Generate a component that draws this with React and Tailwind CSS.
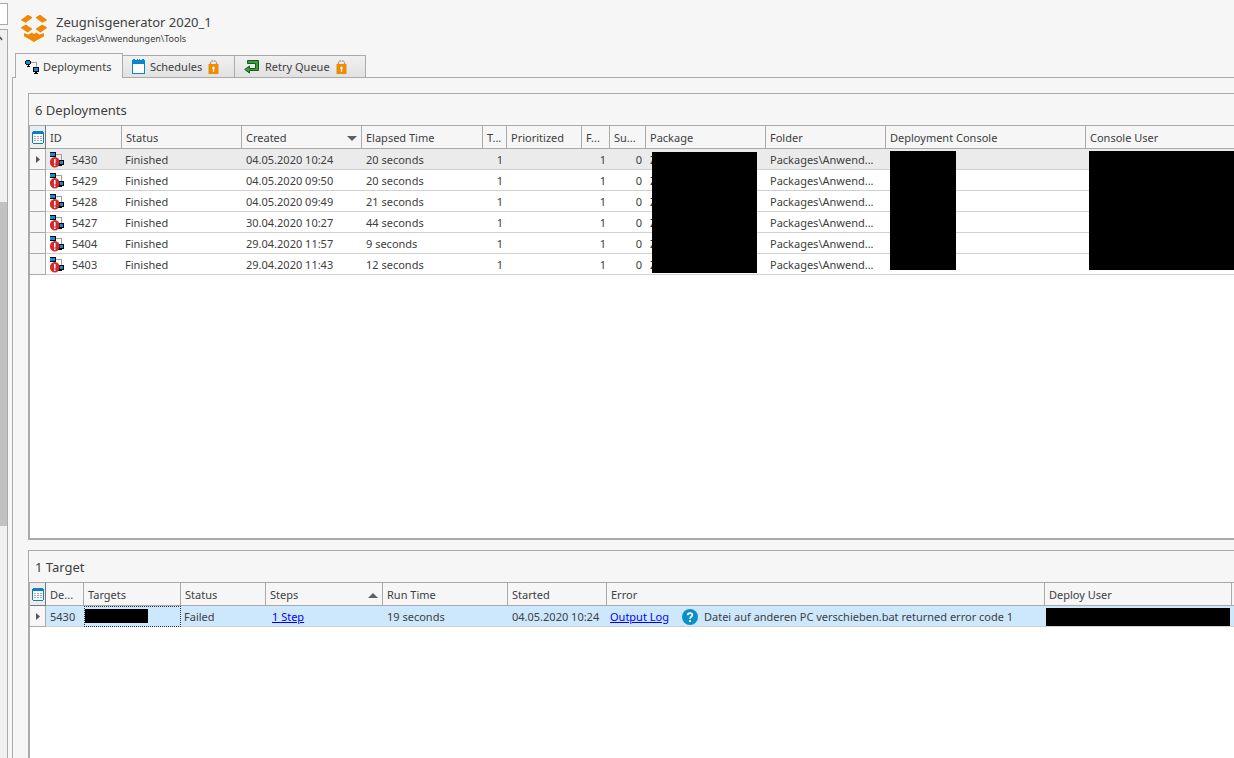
const BLOCK = "absolute bg-black";

const deploymentColumns = [
  { name: "ID", width: 76 },
  { name: "Status", width: 120 },
  { name: "Created", width: 120, sort: "desc" },
  { name: "Elapsed Time", width: 121 },
  { name: "T...", width: 24 },
  { name: "Prioritized", width: 75 },
  { name: "F...", width: 28 },
  { name: "Su...", width: 36 },
  { name: "Package", width: 120 },
  { name: "Folder", width: 120 },
  { name: "Deployment Console", width: 200 },
  { name: "Console User" },
];

const targetColumns = [
  { name: "De...", width: 38 },
  { name: "Targets", width: 97 },
  { name: "Status", width: 85 },
  { name: "Steps", width: 117, sort: "asc" },
  { name: "Run Time", width: 125 },
  { name: "Started", width: 99 },
  { name: "Error", width: 438 },
  { name: "Deploy User", width: 187 },
  { name: "" },
];

const deployments = [
  { id: 5430, created: "04.05.2020 10:24", elapsed: "20 seconds" },
  { id: 5429, created: "04.05.2020 09:50", elapsed: "20 seconds" },
  { id: 5428, created: "04.05.2020 09:49", elapsed: "21 seconds" },
  { id: 5427, created: "30.04.2020 10:27", elapsed: "44 seconds" },
  { id: 5404, created: "29.04.2020 11:57", elapsed: "9 seconds" },
  { id: 5403, created: "29.04.2020 11:43", elapsed: "12 seconds" },
];

function PackageLogo() {
  return (
    <svg
      width="26"
      height="28"
      viewBox="0 0 26 28"
      fill="#f08705"
      stroke="#f08705"
      strokeWidth="1.4"
      strokeLinejoin="round"
      className="shrink-0"
    >
      <path d="M0.8 6 7 1.6 10.4 3.6 4.6 8z" />
      <path d="M25.2 6 19 1.6 15.6 3.6 21.4 8z" />
      <path d="M0.8 13.6 4.8 11.4 10.4 15 6.6 17.8z" />
      <path d="M25.2 13.6 21.2 11.4 15.6 15 19.4 17.8z" />
      <path d="M3.7 20 7.5 21.3 10.8 19.3 13 21 15.2 19.3 18.5 21.3 22.3 20V22L13 27.2 3.7 22z" />
    </svg>
  );
}

function NodesIcon() {
  return (
    <svg width="15" height="15" viewBox="0 0 15 15" shapeRendering="crispEdges" className="shrink-0">
      <path d="M6 2.5H11.5V7" fill="none" stroke="#a0a0a0" />
      <path d="M1 0H5V1H6V4H5V5H4V6H5V7H2V6H3V5H1V4H0V1H1z" fill="#000" />
      <path d="M1 1H5V4H1z" fill="#0a8fd0" />
      <path d="M8 7H14V12H12V13H13V14H9V13H10V12H8z" fill="#000" />
      <path d="M9 8H13V11H9z" fill="#0a8fd0" />
    </svg>
  );
}

function FailedIcon() {
  return (
    <svg width="15" height="16" viewBox="0 0 15 16" className="shrink-0">
      <g shapeRendering="crispEdges">
        <path d="M6 2.5H11.5V8" fill="none" stroke="#a0a0a0" />
        <path d="M0 0H6V5H0z" fill="#000" />
        <path d="M1 1H5V4H1zM0 1H1V4H0z" fill="#0a8fd0" />
        <path d="M8 8H14V13H12V14H8z" fill="#000" />
        <path d="M10 9H13V12H10z" fill="#0a8fd0" />
      </g>
      <ellipse cx="4.8" cy="10.2" rx="4.9" ry="5.3" fill="#d42a2e" />
      <path d="M4 7H5.5V11.5H4zM4 12.5H5.5V14H4z" fill="#fff" />
    </svg>
  );
}

function CalendarIcon() {
  return (
    <svg width="13" height="15" viewBox="0 0 13 15" shapeRendering="crispEdges" className="shrink-0">
      <path d="M0 1H1V0H3V1H5V0H6V1H7V0H8V1H10V0H12V1H13V15H0z" fill="#0a84cc" />
      <path d="M1 5H12V14H1z" fill="#fff" />
    </svg>
  );
}

function LockIcon() {
  return (
    <svg width="11" height="14" viewBox="0 0 11 14" className="ml-px shrink-0">
      <path d="M2.5 4V3C2.5 0 8.5 0 8.5 3V4" fill="none" stroke="#a5a5a5" strokeWidth="1.4" strokeDasharray="2 0.7" />
      <path d="M0.5 4H10.5V14H0.5z" fill="#f08c00" />
      <path d="M5.5 6.5V12M4 8H7" stroke="#fff" strokeWidth="1.2" />
    </svg>
  );
}

function RetryIcon() {
  return (
    <svg width="16" height="15" viewBox="0 0 16 15" className="shrink-0">
      <path
        d="M3.5 1.5H14.5V11.5H5.5V14L0.7 10.5 5.5 7V9.5H11.5V4.5H3.5z"
        fill="#3a9a3c"
        stroke="#145c1c"
      />
    </svg>
  );
}

function GridIcon() {
  return (
    <svg width="12" height="13" viewBox="0 0 12 13" shapeRendering="crispEdges" className="mx-auto block">
      <path d="M1 0H11V1H12V12H11V13H1V12H0V1H1z" fill="#0a7ec8" />
      <path d="M1 3H11V12H1z" fill="#fff" />
      <path d="M2 5.5H10M2 7.5H10M2 9.5H10" stroke="#a8a8a8" strokeDasharray="2 1" />
    </svg>
  );
}

function HelpIcon() {
  return (
    <svg width="16" height="16" viewBox="0 0 16 16" className="shrink-0">
      <circle cx="8" cy="8" r="8" fill="#0a8fc8" />
      <path d="M5.7 6.2C5.7 3.4 10.3 3.4 10.3 6.1 10.3 7.9 8 7.9 8 9.7" fill="none" stroke="#fff" strokeWidth="1.8" />
      <circle cx="8" cy="12" r="1.1" fill="#fff" />
    </svg>
  );
}

function SortArrow({ direction }) {
  return (
    <svg width="10" height="5" viewBox="0 0 10 5" fill="#606060" className="shrink-0">
      <path d={direction === "asc" ? "M0 5H10L5 0z" : "M0 0H10L5 5z"} />
    </svg>
  );
}

function RowMarker() {
  return (
    <svg width="4" height="7" viewBox="0 0 4 7" fill="#555" className="mx-auto block">
      <path d="M0 0 4 3.5 0 7z" />
    </svg>
  );
}

function Tab({ icon, label, active, locked, className }) {
  return (
    <button
      type="button"
      role="tab"
      aria-selected={!!active}
      className={`flex items-center border border-[#aaa] pl-[9px] ${
        active
          ? "h-[25px] gap-[3px] border-b-0 bg-[#f6f6f6] pt-0.5"
          : "h-[23px] gap-[5px] border-l-0 bg-linear-to-b from-[#f0f0f0] to-[#e2e2e2]"
      } ${className}`}
    >
      {icon}
      <span>{label}</span>
      {locked && <LockIcon />}
    </button>
  );
}

function Grid({ columns, children }) {
  return (
    <table className="w-full table-fixed border-separate border-spacing-0 text-left">
      <colgroup>
        <col className="w-4" />
        {columns.map((column) => (
          <col key={column.name} style={{ width: column.width }} />
        ))}
      </colgroup>
      <thead>
        <tr className="h-6 bg-[#f6f6f6]">
          <th className="border border-l-0 border-[#777] border-t-[#aaa] bg-[#ececec] p-0">
            <GridIcon />
          </th>
          {columns.map((column) => (
            <th
              key={column.name}
              className="border-y border-r border-[#aaa] px-1 pt-0.5 pb-0 font-normal whitespace-nowrap last:border-r-0"
            >
              <div className="flex items-center justify-between">
                {column.name}
                {column.sort && <SortArrow direction={column.sort} />}
              </div>
            </th>
          ))}
        </tr>
      </thead>
      <tbody>{children}</tbody>
    </table>
  );
}

function Cell({ className = "px-1 pt-0.5", children }) {
  return (
    <td className={`overflow-hidden border-b border-[#d0d0d0] pb-0 whitespace-nowrap ${className}`}>
      {children}
    </td>
  );
}

function MarkerCell({ current }) {
  return (
    <td className="border-r border-b border-[#aaa] bg-[#f6f6f6] p-0">
      {current && <RowMarker />}
    </td>
  );
}

function Sidebar() {
  return (
    <div className="flex w-2 shrink-0 flex-col gap-1 pt-[3px]">
      <div className="h-[22px] border border-l-0 border-[#aaa] bg-white" />
      <div className="flex flex-1 flex-col border-t border-r border-[#aaa] bg-[#f0f0f0]">
        <svg width="3" height="6" viewBox="0 0 3 6" className="mt-[6px]">
          <path d="M0 1 2 4" stroke="#555" strokeWidth="1.5" />
        </svg>
        <div className="mt-40 h-[324px] bg-[#c1c1c1]" />
      </div>
    </div>
  );
}

export default function App() {
  return (
    <div className="flex h-screen overflow-hidden bg-[#f6f6f6] font-['Noto_Sans','Open_Sans',sans-serif] text-[11px] leading-4 text-[#404040]">
      <Sidebar />
      <main className="flex min-w-0 flex-1 flex-col pl-1">
        <header className="flex h-[53px] shrink-0 items-start gap-[9px] pt-[14px] pl-[9px]">
          <PackageLogo />
          <div>
            <h1 className="text-[13px] leading-4">Zeugnisgenerator 2020_1</h1>
            <p className="text-[9px] leading-[18px]">Packages\Anwendungen\Tools</p>
          </div>
        </header>

        <div role="tablist" className="relative z-10 -mb-px flex shrink-0 items-end pl-[3px]">
          <Tab active icon={<NodesIcon />} label="Deployments" className="w-[108px]" />
          <Tab locked icon={<CalendarIcon />} label="Schedules" className="w-28" />
          <Tab locked icon={<RetryIcon />} label="Retry Queue" className="w-[131px]" />
        </div>

        <div className="flex min-h-0 flex-1 flex-col gap-[10px] border-t border-l border-[#aaa] pt-[15px] pl-[15px]">
          <section className="flex min-h-0 flex-1 flex-col border-t border-b-2 border-l border-[#aaa]">
            <h2 className="px-1.5 pt-[9px] pb-[7px] text-[13px] leading-[15px]">6 Deployments</h2>
            <div className="relative min-h-0 flex-1 overflow-hidden border-l border-[#aaa] bg-white">
              <Grid columns={deploymentColumns}>
                {deployments.map((row, i) => (
                  <tr key={row.id} className={i === 0 ? "h-[21px] bg-[#ebebeb]" : "h-[21px]"}>
                    <MarkerCell current={i === 0} />
                    <Cell>
                      <div className="flex items-center gap-[7px]">
                        <FailedIcon />
                        {row.id}
                      </div>
                    </Cell>
                    <Cell className="px-[3px] pt-0.5">Finished</Cell>
                    <Cell>{row.created}</Cell>
                    <Cell>{row.elapsed}</Cell>
                    <Cell className="pt-0.5 pr-1 text-right">1</Cell>
                    <Cell />
                    <Cell className="pt-0.5 pr-1 text-right">1</Cell>
                    <Cell className="pt-0.5 pr-1 text-right">0</Cell>
                    <Cell>Z</Cell>
                    <Cell>Packages\Anwend...</Cell>
                    <Cell />
                    <Cell />
                  </tr>
                ))}
              </Grid>
              <div className={`${BLOCK} top-[27px] left-[622px] h-[121px] w-[105px]`} />
              <div className={`${BLOCK} top-[26px] left-[860px] h-[119px] w-[66px]`} />
              <div className={`${BLOCK} top-[26px] right-0 left-[1059px] h-[119px]`} />
            </div>
          </section>

          <section className="flex h-52 shrink-0 flex-col border-t border-l border-[#aaa]">
            <h2 className="px-1.5 pt-[9px] pb-[7px] text-[13px] leading-[15px]">1 Target</h2>
            <div className="min-h-0 flex-1 overflow-hidden border-l border-[#aaa] bg-white">
              <Grid columns={targetColumns}>
                <tr className="h-[21px] bg-[#cde8fd]">
                  <MarkerCell current />
                  <Cell>5430</Cell>
                  <td className="border border-dotted border-[#333] p-0 pb-0.5">
                    <div className="h-[14px] w-[63px] bg-black" />
                  </td>
                  <Cell className="px-[3px] pt-0.5">Failed</Cell>
                  <Cell className="px-[6px] pt-0.5">
                    <a href="#steps" className="text-[#0000ff] underline">1 Step</a>
                  </Cell>
                  <Cell>19 seconds</Cell>
                  <Cell>04.05.2020 10:24</Cell>
                  <Cell className="px-[3px] pt-0.5">
                    <div className="flex items-center">
                      <a href="#output-log" className="text-[#0000ff] underline">Output Log</a>
                      <span className="mr-1.5 ml-[13px] flex">
                        <HelpIcon />
                      </span>
                      Datei auf anderen PC verschieben.bat returned error code 1
                    </div>
                  </Cell>
                  <Cell className="pt-0.5 pr-0.5 pl-px">
                    <div className="h-[18px] bg-black" />
                  </Cell>
                  <Cell />
                </tr>
              </Grid>
            </div>
          </section>
        </div>
      </main>
    </div>
  );
}
